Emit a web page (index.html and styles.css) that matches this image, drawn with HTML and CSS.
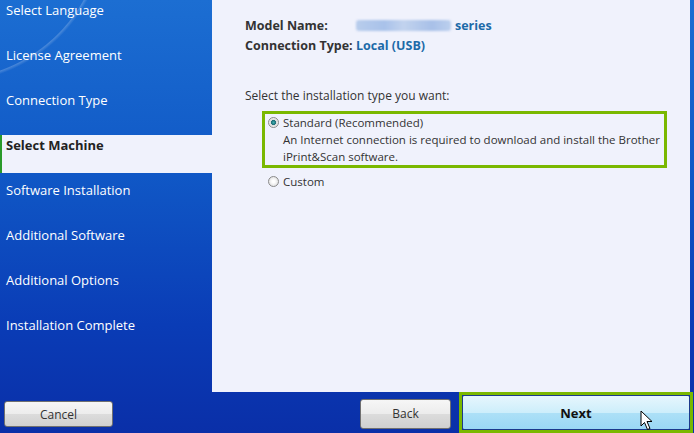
FILE: index.html
```html
<!DOCTYPE html>
<html lang="en">
<head>
  <meta charset="UTF-8" />
  <title>Setup - Select Machine</title>
  <link rel="stylesheet" href="styles.css">
</head>
<body>

  <div class="main">
    <ul class="steps">
      <li>Select Language</li>
      <li>License Agreement</li>
      <li>Connection Type</li>
      <li class="current">Select Machine</li>
      <li>Software Installation</li>
      <li>Additional Software</li>
      <li>Additional Options</li>
      <li>Installation Complete</li>
    </ul>

    <div class="panel">
      <div class="info">
        <span class="label">Model Name:</span>
        <span class="value"><span class="blurred"></span>series</span>
        <span class="label">Connection Type:</span>
        <span class="value">Local (USB)</span>
      </div>

      <p class="prompt">Select the installation type you want:</p>

      <div class="choice selected">
        <span class="radio checked"></span>
        <div>
          <div>Standard (Recommended)</div>
          <div>An Internet connection is required to download and install the Brother iPrint&amp;Scan software.</div>
        </div>
      </div>

      <div class="choice">
        <span class="radio"></span>
        <div>Custom</div>
      </div>
    </div>
  </div>

  <div class="footer">
    <button class="btn cancel">Cancel</button>
    <button class="btn back">Back</button>
    <div class="next-wrap">
      <button class="btn next">Next</button>
      <!-- mouse pointer over the Next button -->
      <svg class="pointer" width="14" height="21" viewBox="0 0 14 21">
        <path d="M1 1 L1 16 L4.5 12.5 L7.5 19.5 L10 18.5 L7 11.5 L12 11.5 Z" fill="white" stroke="black" stroke-width="1"/>
      </svg>
    </div>
  </div>

</body>
</html>
```

FILE: styles.css
```css
html, body {
  margin: 0;
  height: 100%;
}

body {
  font-family: "Open Sans", sans-serif;
  background: linear-gradient(180deg, #1c6ed2 0%, #1058c6 40%, #0a3cb6 75%, #0a2fa8 100%);
  color: #333;
  display: flex;
  flex-direction: column;
  overflow: hidden;
}

.main {
  display: flex;
  height: 392px;
  padding-right: 4px;
}

.steps {
  list-style: none;
  margin: 0;
  padding: 0;
  width: 212px;
  flex-shrink: 0;
  display: flex;
  flex-direction: column;
  gap: 7px;
  /* faint swoosh in the top corner */
  background: radial-gradient(circle at -52px -76px, transparent 155px, rgba(255,255,255,0.2) 156px, transparent 159px);
}

.steps li {
  height: 38px;
  padding: 1px 0 0 6px;
  box-sizing: border-box;
  font-size: 13px;
  line-height: 18px;
  color: white;
}

.steps li.current {
  background-color: #f0f2fc;
  color: #222;
  font-weight: bold;
  border-left: 2px solid #2a9a2a;
  padding-left: 4px;
}

.panel {
  flex: 1;
  background-color: #f0f2fc;
  padding: 16px 20px 0 33px;
  font-size: 12px;
}

.info {
  display: grid;
  grid-template-columns: 111px auto;
  row-gap: 1px;
  font-size: 12.5px;
  font-weight: bold;
  line-height: 19px;
}

.label {
  color: #333;
}

.value {
  color: #1c6aa8;
  display: flex;
  align-items: center;
}

.blurred {
  display: inline-block;
  width: 95px;
  height: 11px;
  margin-right: 4px;
  border-radius: 3px;
  background: linear-gradient(90deg, #b8cdec, #a9c2ea 30%, #c2d3ee 50%, #a8c0e8 80%, #bcd0ee);
  filter: blur(1px);
}

.prompt {
  margin: 33px 0 7px;
  line-height: 16px;
}

.choice {
  display: flex;
  gap: 4px;
  line-height: 17px;
  font-size: 11.5px;
  margin-left: 23px;
  color: #333;
}

.choice.selected {
  border: 3px solid #7ab800;
  margin-left: 17px;
  padding: 0 0 0 3px;
  width: 396px;
  margin-bottom: 5px;
}

.radio {
  width: 11px;
  height: 11px;
  margin-top: 3px;
  border-radius: 50%;
  border: 1px solid #8a8a8a;
  box-sizing: border-box;
  background: radial-gradient(circle, #ffffff 20%, #d6d6d6 100%);
  flex-shrink: 0;
}

.radio.checked {
  background: radial-gradient(circle, #3fb0b0 0, #1f6f78 35%, #dcdcdc 45%, #ffffff 100%);
}

.footer {
  flex: 1;
  display: flex;
  align-items: center;
  padding: 0 1px 0 4px;
}

.btn {
  font-family: "Open Sans", sans-serif;
  font-size: 12px;
  color: #333;
  border: 1px solid #707070;
  border-radius: 3px;
  background: linear-gradient(180deg, #f6f6f6 0%, #ececec 50%, #dcdcdc 51%, #d0d0d0 100%);
  cursor: pointer;
}

.cancel {
  width: 109px;
  height: 26px;
  margin-top: 3px;
}

.back {
  width: 91px;
  height: 30px;
  margin-left: 247px;
  margin-top: 2px;
}

.next-wrap {
  position: relative;
  margin-left: 8px;
  border: 3px solid #7ab800;
  height: 41px;
  box-sizing: border-box;
  flex: 1;
  display: flex;
}

.next {
  flex: 1;
  font-weight: bold;
  font-size: 13px;
  color: #111;
  border: 1px solid #1c3a8c;
  border-radius: 2px;
  background: linear-gradient(180deg, #e6f6fd 0%, #cdeefb 50%, #ade0f7 51%, #9ad8f5 100%);
}

.pointer {
  position: absolute;
  left: 178px;
  top: 15px;
}
```
